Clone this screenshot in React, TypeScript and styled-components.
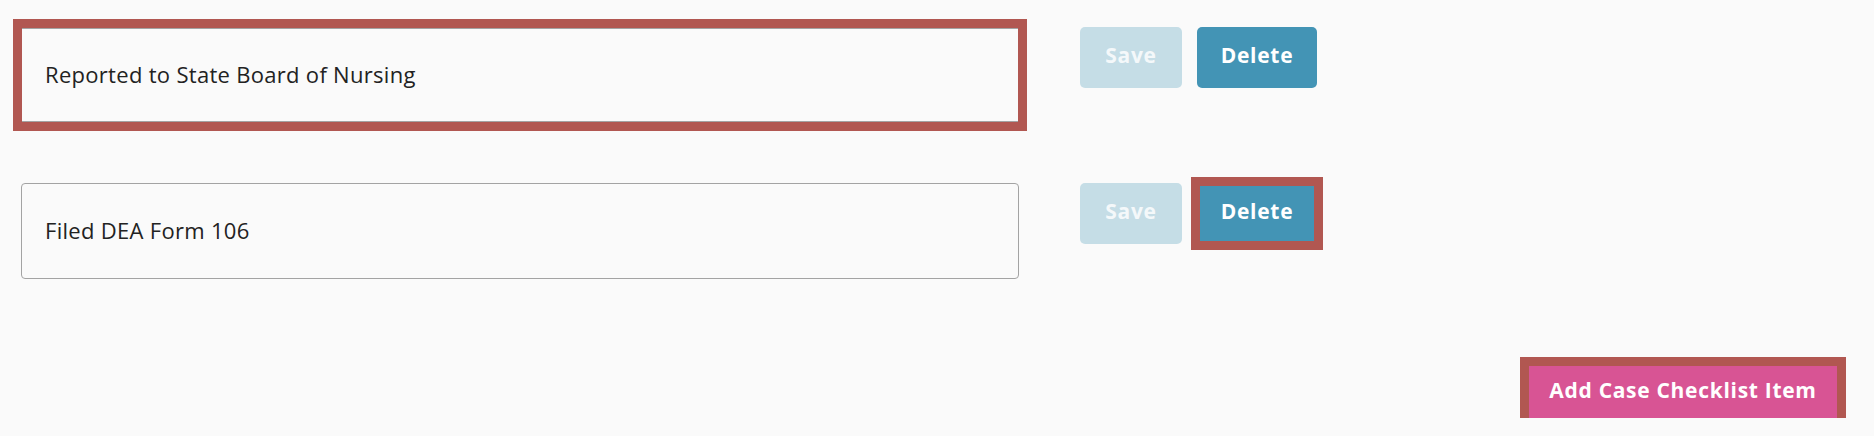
import React from "react";
import styled, { createGlobalStyle, css } from "styled-components";

const GlobalStyle = createGlobalStyle`
  html, body {
    margin: 0;
    padding: 0;
    background: #fafafa;
  }
  body {
    font-family: "Open Sans", Lato, Arial, sans-serif;
  }
`;

const Page = styled.div`
  padding: 27px 28px 0 21px;
  display: flex;
  flex-direction: column;
`;

const List = styled.div`
  display: flex;
  flex-direction: column;
  gap: 60px;
`;

const Row = styled.div`
  display: flex;
  align-items: flex-start;
  gap: 61px;
`;

const ringColor = "#b15751";

const TextInput = styled.input<{ $focused?: boolean }>`
  box-sizing: border-box;
  width: 998px;
  height: 96px;
  padding: 0 22px 2px 23px;
  border: 1px solid #a3a3a3;
  border-radius: 4px;
  background: #fafafa;
  color: #222;
  font-family: "Open Sans", Lato, Arial, sans-serif;
  font-size: 22px;
  letter-spacing: 0.3px;
  ${(p) =>
    p.$focused &&
    css`
      outline: 9px solid ${ringColor};
      outline-offset: -1px;
      border-radius: 0;
      border-top-width: 2px;
      border-bottom-width: 2px;
    `}
`;

const Actions = styled.div`
  display: flex;
  gap: 15px;
`;

const Button = styled.button<{ $variant: "save" | "delete" | "add"; $focused?: boolean }>`
  box-sizing: border-box;
  height: 61px;
  padding: 0 0 5px;
  border: none;
  border-radius: 5px;
  font-family: "Open Sans", Lato, Arial, sans-serif;
  font-weight: 700;
  font-size: 21px;
  letter-spacing: 0.7px;
  color: #fff;
  cursor: pointer;
  ${(p) =>
    p.$variant === "save" &&
    css`
      width: 102px;
      background: #c5dde6;
      color: #f4f8fa;
    `}
  ${(p) =>
    p.$variant === "delete" &&
    css`
      width: 120px;
      background: #4394b5;
    `}
  ${(p) =>
    p.$variant === "add" &&
    css`
      width: 308px;
      height: 52px;
      border-radius: 0;
      background: #d85494;
    `}
  ${(p) =>
    p.$focused &&
    css`
      outline: 9px solid ${ringColor};
      outline-offset: ${p.$variant === "add" ? "0px" : "-3px"};
      border-radius: 0;
    `}
`;

const Footer = styled.div`
  display: flex;
  justify-content: flex-end;
  padding: 87px 9px 0 0;
`;

type Item = { label: string; focused?: boolean; deleteFocused?: boolean };

const items: Item[] = [
  { label: "Reported to State Board of Nursing", focused: true },
  { label: "Filed DEA Form 106", deleteFocused: true },
];

export default function App() {
  return (
    <>
      <GlobalStyle />
      <Page>
        <List>
          {items.map((item) => (
            <Row key={item.label}>
              <TextInput $focused={item.focused} defaultValue={item.label} />
              <Actions>
                <Button $variant="save" disabled>
                  Save
                </Button>
                <Button $variant="delete" $focused={item.deleteFocused}>
                  Delete
                </Button>
              </Actions>
            </Row>
          ))}
        </List>
        <Footer>
          <Button $variant="add" $focused>
            Add Case Checklist Item
          </Button>
        </Footer>
      </Page>
    </>
  );
}
